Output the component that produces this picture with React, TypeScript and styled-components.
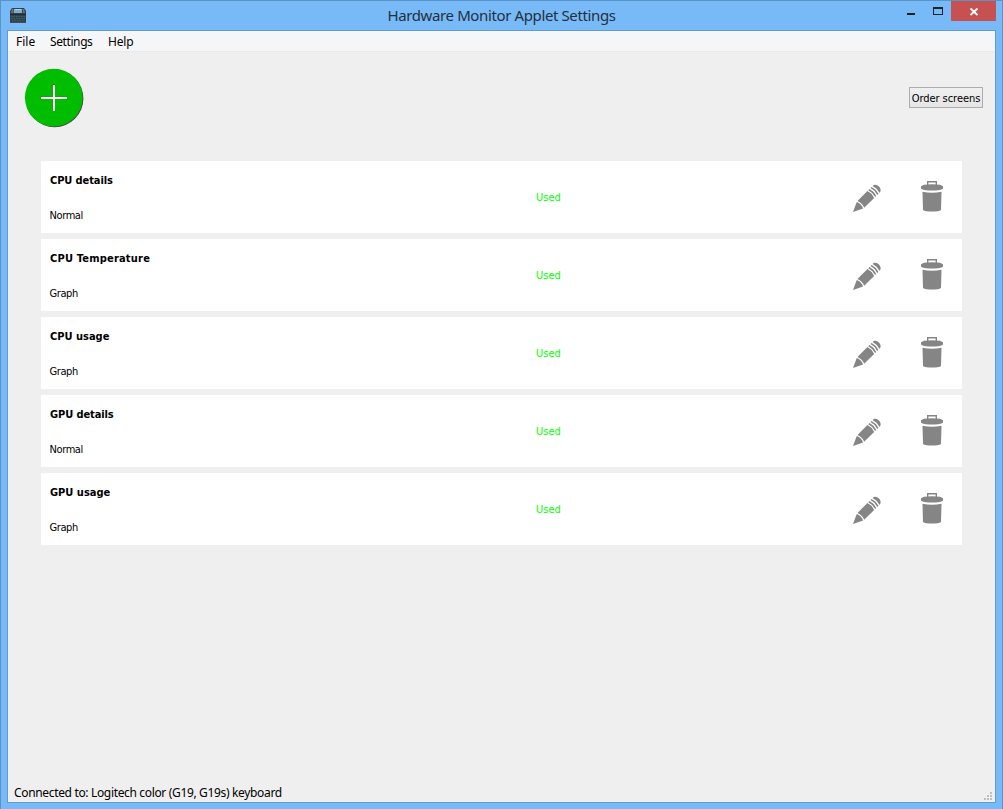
import React from "react";
import styled, { createGlobalStyle } from "styled-components";

const GlobalStyle = createGlobalStyle`
  * { box-sizing: border-box; }
  body { margin: 0; overflow: hidden; }
`;

const Window = styled.div`
  width: 1003px;
  height: 809px;
  display: flex;
  flex-direction: column;
  padding: 0 6px 6px;
  background: #78b9f7;
  border: 1px solid #5c93c5;
  border-bottom: 0;
  color: #000;
  font-family: "Noto Sans", "Open Sans", sans-serif;
`;

const TitleBar = styled.header`
  height: 29px;
  flex: none;
  display: grid;
  grid-template-columns: 100px 1fr 100px;
`;

const AppIcon = styled.svg`
  margin: 7px 0 0 3px;
`;

const Title = styled.h1`
  margin: 0;
  text-align: center;
  font-size: 15px;
  font-weight: 400;
  line-height: 29px;
  letter-spacing: -0.38px;
  white-space: nowrap;
  color: #24303c;
`;

const Controls = styled.div`
  display: flex;
  justify-content: flex-end;
`;

const ControlButton = styled.button<{ $w: number; $danger?: boolean }>`
  width: ${(p) => p.$w}px;
  height: 20px;
  flex: none;
  padding: 0;
  border: 0;
  background: ${(p) => (p.$danger ? "#c75050" : "transparent")};
  svg { display: block; }
`;

const Client = styled.main`
  flex: 1;
  display: flex;
  flex-direction: column;
  background: #efefef;
  border: 1px solid #619cd0;
`;

const MenuBar = styled.nav`
  height: 21px;
  flex: none;
  display: flex;
  gap: 16px;
  padding-left: 8px;
  background: #f5f6f7;
  border-bottom: 1px solid #e8e9eb;
`;

const MenuItem = styled.span<{ $w: number; $spacing?: number }>`
  width: ${(p) => p.$w}px;
  font-size: 12px;
  line-height: 22px;
  letter-spacing: ${(p) => p.$spacing ?? 0}px;
  white-space: nowrap;
`;

const Toolbar = styled.div`
  height: 109px;
  flex: none;
  display: flex;
  justify-content: space-between;
  padding: 15px 12px 0 15px;
`;

const AddButton = styled.button`
  width: 62px;
  height: 62px;
  padding: 0;
  border: 0;
  background: none;
  svg { display: block; }
`;

const OrderButton = styled.button`
  width: 74px;
  height: 21px;
  margin-top: 20px;
  padding: 2px 0 0;
  border: 1px solid #acacac;
  background: linear-gradient(#f0f0f0, #e5e5e5);
  color: #000;
  font: 11px/17px "DejaVu Sans Condensed", "DejaVu Sans", sans-serif;
  letter-spacing: -0.05px;
  white-space: nowrap;
`;

const ScreenList = styled.section`
  flex: 1;
  display: flex;
  flex-direction: column;
  gap: 6px;
  padding: 0 33px;
`;

const ScreenRow = styled.article`
  height: 72px;
  display: grid;
  grid-template-columns: 486px 1fr auto;
  align-items: center;
  padding: 0 12px 0 9px;
  background: #fff;
  font: 11px/14px "DejaVu Sans Condensed", "DejaVu Sans", sans-serif;
`;

const RowText = styled.div`
  display: flex;
  flex-direction: column;
  gap: 21px;
  padding-top: 3px;
`;

const RowName = styled.span<{ $spacing: number }>`
  font-weight: 700;
  letter-spacing: ${(p) => p.$spacing}px;
`;

const RowKind = styled.span`
  margin-left: -0.5px;
  letter-spacing: -0.4px;
`;

const Status = styled.span`
  padding-top: 2px;
  letter-spacing: 0;
  color: #00ff00;
`;

const Actions = styled.div`
  display: flex;
  gap: 29px;
`;

const IconButton = styled.button`
  width: 36px;
  height: 36px;
  padding: 0;
  border: 0;
  background: none;
  svg { display: block; }
`;

const StatusBar = styled.footer`
  height: 19px;
  flex: none;
  display: flex;
  justify-content: space-between;
  align-items: flex-end;
  padding: 0 3px 1px 6px;
  font-size: 12px;
  line-height: 17px;
  letter-spacing: -0.34px;
`;

const Grip = styled.svg`
  margin-bottom: 1px;
`;

const PencilIcon = () => (
  <svg width="36" height="36" viewBox="0 0 36 36" fill="#858585">
    <g transform="translate(4 33) rotate(-44.5) scale(.97 1)">
      <path d="M0 0 L10-4.5 Q12.2 0 10 4.5Z" />
      <path d="M11.3-4.8H25.7Q27.5 0 25.7 4.8H11.3Q13.5 0 11.3-4.8Z" />
      <path d="M27-4.8h1.7Q30.4 0 28.7 4.8H27Q28.7 0 27-4.8Z" />
      <path d="M30.1-4.8h1.7Q33.5 0 31.8 4.8h-1.7Q31.8 0 30.1-4.8Z" />
      <path d="M33.2-4.8h1.2c4.2 1 4.2 8.6 0 9.6h-1.2Q34.9 0 33.2-4.8Z" />
    </g>
  </svg>
);

const TrashIcon = () => (
  <svg width="36" height="36" viewBox="0 0 36 36" fill="#858585">
    <path d="M13.7 7V2.7h8.6V7" fill="none" stroke="#858585" strokeWidth="1.4" />
    <path d="M10 5.8q8-1 16 0l3 1.4v2.2c-2.4 2.9-19.6 2.9-22 0V7.2Z" />
    <path d="M8.5 12.8Q18 14.6 27.5 12.8L27 31c-2.6 2.1-15.4 2.1-18 0Z" />
  </svg>
);

const screens = [
  { name: "CPU details", kind: "Normal", spacing: -0.1 },
  { name: "CPU Temperature", kind: "Graph", spacing: 0.2 },
  { name: "CPU usage", kind: "Graph", spacing: 0 },
  { name: "GPU details", kind: "Normal", spacing: -0.1 },
  { name: "GPU usage", kind: "Graph", spacing: 0 },
];

const grip = [[6, 0], [3, 3], [6, 3], [0, 6], [3, 6], [6, 6]];

export default function App() {
  return (
    <>
      <GlobalStyle />
      <Window>
        <TitleBar>
          <AppIcon width="16" height="16" viewBox="0 0 16 16">
            <path d="M2 0h12l2 3v12H0V3Z" fill="#35404a" />
            <path d="M4 1h8v4H4Z" fill="#78aec8" />
            <path d="M5 1h6v1H5Z" fill="#a9dce9" />
            <path d="M2 1h1.5v4H1Zm10.5 0H14l1 4h-2Z" fill="#68737c" />
            <path d="M0 6h16v1H0Z" fill="#202a32" />
            <path d="M1 8.5h14M1 10.5h14M2 12.5h12" stroke="#287a7b" strokeDasharray="1.5 1" opacity=".7" />
            <path d="M0 14h16v1H0Z" fill="#534b4b" />
          </AppIcon>
          <Title>Hardware Monitor Applet Settings</Title>
          <Controls>
            <ControlButton $w={27} aria-label="Minimize">
              <svg width="27" height="20"><path d="M10 12h8v2h-8Z" fill="#222" /></svg>
            </ControlButton>
            <ControlButton $w={27} aria-label="Maximize">
              <svg width="27" height="20"><path fillRule="evenodd" d="M9 6h10v8H9Zm1 2v5h8V8Z" fill="#222" /></svg>
            </ControlButton>
            <ControlButton $w={45} $danger aria-label="Close">
              <svg width="45" height="20"><path d="M19.5 7.5l7 6.5m0-6.5l-7 6.5" stroke="#fff" strokeWidth="1.8" /></svg>
            </ControlButton>
          </Controls>
        </TitleBar>
        <Client>
          <MenuBar>
            <MenuItem $w={18}>File</MenuItem>
            <MenuItem $w={42} $spacing={-0.4}>Settings</MenuItem>
            <MenuItem $w={26} $spacing={-0.2}>Help</MenuItem>
          </MenuBar>
          <Toolbar>
            <AddButton aria-label="Add screen">
              <svg width="62" height="62" viewBox="0 0 62 62">
                <defs>
                  <filter id="soft"><feGaussianBlur stdDeviation="0.7" /></filter>
                </defs>
                <circle cx="31.6" cy="31.4" r="28.8" fill="#444" filter="url(#soft)" />
                <circle cx="30.8" cy="30.6" r="28.9" fill="#00bd00" />
                <path d="M30.5 17.5v26M17.5 30.5h26" stroke="#557055" strokeWidth="2.6" />
                <path d="M31 18v26M18 31h26" stroke="#f0f0f0" strokeWidth="2" />
              </svg>
            </AddButton>
            <OrderButton>Order screens</OrderButton>
          </Toolbar>
          <ScreenList>
            {screens.map((s) => (
              <ScreenRow key={s.name}>
                <RowText>
                  <RowName $spacing={s.spacing}>{s.name}</RowName>
                  <RowKind>{s.kind}</RowKind>
                </RowText>
                <Status>Used</Status>
                <Actions>
                  <IconButton aria-label="Edit"><PencilIcon /></IconButton>
                  <IconButton aria-label="Delete"><TrashIcon /></IconButton>
                </Actions>
              </ScreenRow>
            ))}
          </ScreenList>
          <StatusBar>
            <span>Connected to: Logitech color (G19, G19s) keyboard</span>
            <Grip width="8" height="8">
              {grip.map(([x, y]) => (
                <rect key={`${x}-${y}`} x={x} y={y} width="2" height="2" fill="#bfbfbf" />
              ))}
            </Grip>
          </StatusBar>
        </Client>
      </Window>
    </>
  );
}
